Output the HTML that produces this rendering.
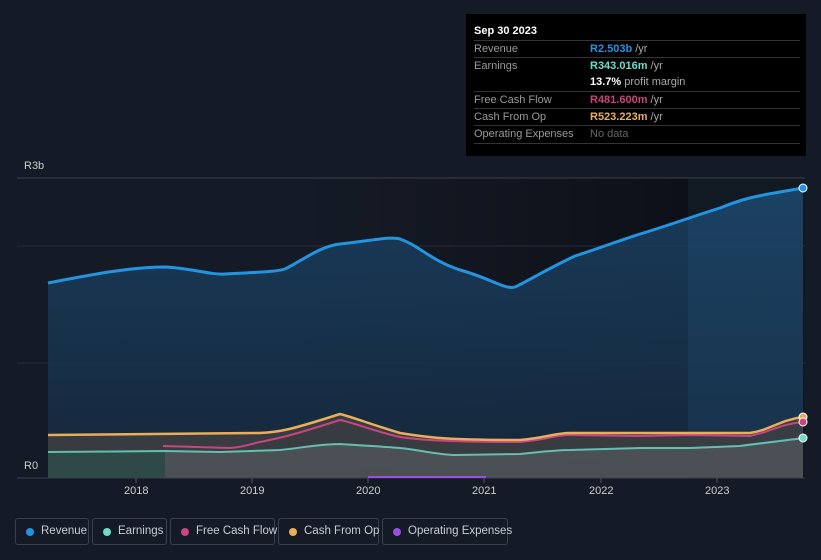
<!DOCTYPE html><html><head><style>
body{margin:0;background:#151b26;font-family:"Liberation Sans",sans-serif;width:821px;height:560px;overflow:hidden;position:relative}
.tt{position:absolute;left:466px;top:14px;width:340px;height:142px;background:#000;color:#fff;font-size:11px}
.tt .h{position:absolute;left:8px;top:11px;font-weight:bold}
.row{position:absolute;left:8px;width:326px;border-top:1px solid #333;height:17px;line-height:17px}
.row .l{position:absolute;left:0;color:#9a9a9a}
.row .v{position:absolute;left:116px;font-weight:bold}
.u{color:#aaa;font-weight:normal}
.lg{position:absolute;top:518px;height:27px;border:1px solid #3a404c;border-radius:3px;color:#c8ccd2;font-size:11.5px;line-height:25px;box-sizing:border-box;white-space:nowrap}
.lg i{position:absolute;left:10px;top:9px;width:8px;height:8px;border-radius:50%}
.lg span{position:absolute;left:25px}
.ax{position:absolute;color:#ccc;font-size:11px}
</style></head><body>
<svg width="821" height="560" style="position:absolute;left:0;top:0">
<defs>
<linearGradient id="dk" x1="0" x2="1" y1="0" y2="0"><stop offset="0" stop-color="#0d1018" stop-opacity="0"/><stop offset="1" stop-color="#0d1018" stop-opacity="1"/></linearGradient>
<linearGradient id="rv" x1="0" x2="0" y1="0" y2="1"><stop offset="0" stop-color="#1a3f60"/><stop offset="1" stop-color="#15283d"/></linearGradient>
<clipPath id="rc"><path d="M48,283 C90,275 130,267 165,267 C190,268 210,275 225,274 C260,272 275,272 285,269 C300,262 320,246 340,244 C370,241 390,236 400,239 C420,246 430,260 460,270 C490,278 505,290 515,287 C530,280 545,270 575,256 C600,248 615,242 640,234 C670,225 700,214 720,208 C740,200 750,197 780,192 L803,188 L803,478 L48,478Z"/></clipPath>
</defs>
<rect x="300" y="178" width="388" height="300" fill="url(#dk)"/>
<rect x="688" y="178" width="117" height="300" fill="#111923"/>
<line x1="17" y1="178" x2="805" y2="178" stroke="#3a404a"/>
<line x1="17" y1="246" x2="805" y2="246" stroke="#262d38"/>
<line x1="17" y1="363" x2="805" y2="363" stroke="#262d38"/>
<path d="M48,283 C90,275 130,267 165,267 C190,268 210,275 225,274 C260,272 275,272 285,269 C300,262 320,246 340,244 C370,241 390,236 400,239 C420,246 430,260 460,270 C490,278 505,290 515,287 C530,280 545,270 575,256 C600,248 615,242 640,234 C670,225 700,214 720,208 C740,200 750,197 780,192 L803,188 L803,478 L48,478Z" fill="url(#rv)" opacity="0.9"/>
<rect x="688" y="178" width="115" height="300" fill="#2a6a9a" opacity="0.15" clip-path="url(#rc)"/>
<path d="M48,435 L260,433 C280,432 290,430 340,414 C355,418 370,424 400,433 C430,438 450,440 520,440 C545,438 555,433 570,433 L750,433 C770,430 780,420 803,417 L803,478 L48,478Z" fill="#3e3f42" opacity="0.85"/>
<path d="M165,451 L220,452 L280,450 C300,448 320,444 340,444 C370,446 390,447 400,448 C420,450 440,455 455,455 L520,454 C540,452 555,450 570,450 L640,448 L690,448 L740,446 C770,442 790,440 803,438 L803,478 L165,478Z" fill="#4d5358" opacity="0.85"/>
<path d="M48,452 L165,451 L165,478 L48,478Z" fill="#2f4a46"/>
<path d="M48,283 C90,275 130,267 165,267 C190,268 210,275 225,274 C260,272 275,272 285,269 C300,262 320,246 340,244 C370,241 390,236 400,239 C420,246 430,260 460,270 C490,278 505,290 515,287 C530,280 545,270 575,256 C600,248 615,242 640,234 C670,225 700,214 720,208 C740,200 750,197 780,192 L803,188" fill="none" stroke="#2394df" stroke-width="3"/>
<path d="M163,446 L230,448 C245,447 250,444 260,442 C280,438 290,436 340,420 C355,423 370,430 400,437 C420,440 450,442 520,442 C545,440 555,435 570,435 L640,436 L690,435 L750,436 C770,432 780,424 803,422" fill="none" stroke="#c8457f" stroke-width="2"/>
<path d="M48,435 L260,433 C280,432 290,430 340,414 C355,418 370,424 400,433 C430,438 450,440 520,440 C545,438 555,433 570,433 L750,433 C770,430 780,420 803,417" fill="none" stroke="#e8ae5c" stroke-width="2.5"/>
<path d="M48,452 L165,451 L220,452 L280,450 C300,448 320,444 340,444 C370,446 390,447 400,448 C420,450 440,455 455,455 L520,454 C540,452 555,450 570,450 L640,448 L690,448 L740,446 C770,442 790,440 803,438" fill="none" stroke="#6fdcc9" stroke-width="2" opacity="0.8"/>
<line x1="17" y1="478" x2="805" y2="478" stroke="#3a404a"/>
<g stroke="#555" stroke-width="1"><line x1="136" y1="478" x2="136" y2="483"/><line x1="252" y1="478" x2="252" y2="483"/><line x1="368" y1="478" x2="368" y2="483"/><line x1="484" y1="478" x2="484" y2="483"/><line x1="601" y1="478" x2="601" y2="483"/><line x1="717" y1="478" x2="717" y2="483"/></g>
<line x1="368" y1="477" x2="486" y2="477" stroke="#9b4fe0" stroke-width="2"/>
<circle cx="803" cy="188" r="4" fill="#2394df" stroke="#fff" stroke-width="1"/>
<circle cx="803" cy="417" r="4" fill="#e8ae5c" stroke="#fff" stroke-width="1"/>
<circle cx="803" cy="422" r="4" fill="#c8457f" stroke="#fff" stroke-width="1"/>
<circle cx="803" cy="438" r="4" fill="#6fdcc9" stroke="#fff" stroke-width="1"/>
</svg>
<div class="ax" style="left:24px;top:160px">R3b</div>
<div class="ax" style="left:24px;top:460px">R0</div>
<div class="ax" style="left:124px;top:485px">2018</div>
<div class="ax" style="left:240px;top:485px">2019</div>
<div class="ax" style="left:356px;top:485px">2020</div>
<div class="ax" style="left:472px;top:485px">2021</div>
<div class="ax" style="left:589px;top:485px">2022</div>
<div class="ax" style="left:705px;top:485px">2023</div>
<div class="tt"><div class="h">Sep 30 2023</div>
<div class="row" style="top:26px"><span class="l">Revenue</span><span class="v" style="color:#2394df">R2.503b <span class="u">/yr</span></span></div>
<div class="row" style="top:43px"><span class="l">Earnings</span><span class="v" style="color:#6fdcc9">R343.016m <span class="u">/yr</span></span></div>
<div class="row" style="top:60px;border-top:none"><span class="v" style="color:#fff">13.7% <span class="u">profit margin</span></span></div>
<div class="row" style="top:77px"><span class="l">Free Cash Flow</span><span class="v" style="color:#c8457f">R481.600m <span class="u">/yr</span></span></div>
<div class="row" style="top:94px"><span class="l">Cash From Op</span><span class="v" style="color:#e8ae5c">R523.223m <span class="u">/yr</span></span></div>
<div class="row" style="top:111px;border-bottom:1px solid #333"><span class="l">Operating Expenses</span><span class="v" style="color:#666;font-weight:normal">No data</span></div>
</div>
<div class="lg" style="left:15px;width:74px"><i style="background:#2394df"></i><span>Revenue</span></div>
<div class="lg" style="left:92px;width:75px"><i style="background:#6fdcc9"></i><span>Earnings</span></div>
<div class="lg" style="left:170px;width:105px"><i style="background:#c8457f"></i><span>Free Cash Flow</span></div>
<div class="lg" style="left:278px;width:101px"><i style="background:#e8ae5c"></i><span>Cash From Op</span></div>
<div class="lg" style="left:382px;width:126px"><i style="background:#9b4fe0"></i><span>Operating Expenses</span></div>
</body></html>
